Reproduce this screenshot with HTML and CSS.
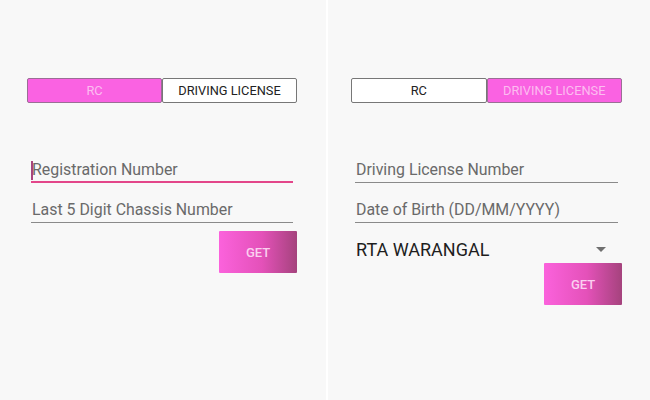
FILE: index.html
```html
<!DOCTYPE html>
<html>
<head>
<meta charset="utf-8">
<link rel="stylesheet" href="styles.css">
</head>
<body>
<div class="screen">
  <section class="panel panel-left">
    <div class="tabs">
      <div class="tab tab-active">RC</div>
      <div class="tab">DRIVING LICENSE</div>
    </div>
    <div class="form">
      <div class="field field-focus"><span class="cursor"></span>Registration Number</div>
      <div class="field">Last 5 Digit Chassis Number</div>
      <div class="actions"><button class="get">GET</button></div>
    </div>
  </section>
  <div class="divider"></div>
  <section class="panel panel-right">
    <div class="tabs">
      <div class="tab">RC</div>
      <div class="tab tab-active">DRIVING LICENSE</div>
    </div>
    <div class="form">
      <div class="field">Driving License Number</div>
      <div class="field">Date of Birth (DD/MM/YYYY)</div>
      <div class="spinner"><span>RTA WARANGAL</span><span class="arrow"></span></div>
      <div class="actions actions-right"><button class="get">GET</button></div>
    </div>
  </section>
</div>
</body>
</html>
```
FILE: styles.css
```css
html, body {
  margin: 0;
  padding: 0;
  background: #f8f8f8;
  font-family: Roboto, "Liberation Sans", sans-serif;
}
.screen {
  display: flex;
  width: 650px;
  height: 400px;
}
.panel {
  display: flex;
  flex-direction: column;
  padding-top: 78px;
  box-sizing: border-box;
}
.panel-left {
  width: 326px;
  padding-left: 27px;
  padding-right: 29px;
}
.panel-right {
  width: 322px;
  padding-left: 23px;
  padding-right: 28px;
}
.divider {
  width: 2px;
  background: #ffffff;
}
.tabs {
  display: flex;
  height: 25px;
}
.tab {
  flex: 1;
  display: flex;
  align-items: center;
  justify-content: center;
  background: #ffffff;
  border: 1px solid #777777;
  border-radius: 2px;
  box-sizing: border-box;
  font-size: 12.8px;
  color: #222222;
}
.tab-active {
  background: #fa62e2;
  color: #fcbdf0;
  border-color: #9a6f95;
}
.form {
  display: flex;
  flex-direction: column;
  margin-top: 58px;
  padding: 0 4px;
}
.field {
  position: relative;
  font-size: 15.9px;
  line-height: 18px;
  color: #6a6a6a;
  padding: 0 0 3px 1px;
  border-bottom: 1px solid #8a8a8a;
  margin-bottom: 18px;
}
.field-focus {
  border-bottom: 2px solid #e3468a;
  padding-bottom: 2px;
}
.cursor {
  position: absolute;
  left: 0;
  top: 0;
  width: 1.5px;
  height: 19px;
  background: #a8457e;
}
.actions {
  display: flex;
  justify-content: flex-end;
  margin-right: -4px;
  margin-top: -10px;
}
.get {
  width: 78px;
  height: 42px;
  border: none;
  border-radius: 1px;
  background: linear-gradient(to right, #fb62dc 0%, #e451b9 55%, #a5437d 100%);
  color: #fbd0f0;
  font-family: Roboto, "Liberation Sans", sans-serif;
  font-size: 13px;
  font-weight: 500;
  padding: 0;
}
.spinner {
  display: flex;
  align-items: center;
  justify-content: space-between;
  height: 24px;
  margin-top: -4px;
  padding-left: 1px;
  padding-right: 12px;
  font-size: 18px;
  color: #1e1e1e;
}
.arrow {
  width: 0;
  height: 0;
  border-left: 5px solid transparent;
  border-right: 5px solid transparent;
  border-top: 5px solid #707070;
}
.actions-right {
  margin-top: 2px;
}
```
